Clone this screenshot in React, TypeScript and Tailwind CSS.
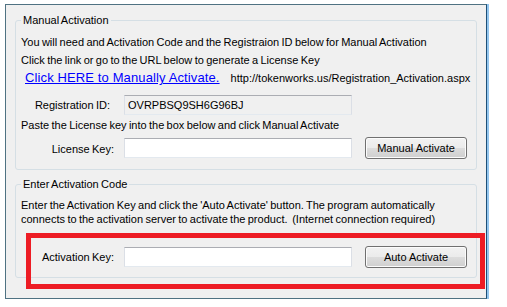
import type { ReactNode } from "react";

// Win7-style push button
function WinButton({ children }: { children: ReactNode }) {
  return (
    <button
      type="button"
      className="ml-[13px] h-[22px] w-[102px] rounded-[3px] border border-[#707070] bg-[linear-gradient(#f2f2f2_0%,#ebebeb_50%,#dddddd_50%,#cfcfcf_100%)] text-[11px] leading-[14px] text-black shadow-[inset_0_0_0_1px_#fcfcfc]"
    >
      {children}
    </button>
  );
}

// Win7-style text box
function WinTextBox({ value, readOnly, className }: { value?: string; readOnly?: boolean; className?: string }) {
  return (
    <input
      readOnly={readOnly}
      defaultValue={value}
      className={
        "h-[20px] w-[228px] border border-[#dbdfe6] border-t-[#abadb3] border-b-[#e3e9ef] px-[3px] text-[11px] leading-[14px] text-black outline-none " +
        (className ?? "")
      }
    />
  );
}

export default function App() {
  return (
    <div className="h-[307px] w-[507px] bg-white pl-[5px] pt-[4px] font-['Liberation_Sans',Arial,sans-serif] text-[11px] text-black [word-spacing:-0.7px]">
      {/* ── Dialog window ───────────────────────────────────────────────── */}
      <div className="relative h-[295px] w-[482px] border border-[#4f7282] border-r-[#1d4f77] bg-[#f0f0f0] pl-[9px] pt-[8px] shadow-[2px_0_0_#94c6ee]">
        {/* ── Manual Activation ─────────────────────────────────────────── */}
        <fieldset className="h-[157px] w-[462px] rounded-[3px] border border-[#d5dfe5] pl-[5px] pt-[6px]">
          <legend className="px-[2px] leading-[14px]">Manual Activation</legend>
          <p className="whitespace-nowrap leading-[18px]">
            You will need and Activation Code and the Registraion ID below for Manual Activation
          </p>
          <p className="whitespace-nowrap leading-[18px]">
            Click the link or go to the URL below to generate a License Key
          </p>
          <div className="flex h-[18px] items-center whitespace-nowrap">
            <a href="#" className="ml-[4px] text-[13px] leading-[18px] tracking-[0.12px] text-[#0000ff] underline [word-spacing:0px]">
              Click HERE to Manually Activate.
            </a>
            <span className="ml-[11px]">http://tokenworks.us/Registration_Activation.aspx</span>
          </div>
          <div className="mt-[8px] flex h-[20px] items-center">
            <span className="w-[89px] text-right">Registration ID:</span>
            <WinTextBox readOnly value="OVRPBSQ9SH6G96BJ" className="ml-[14px] bg-[#f0f0f0]" />
          </div>
          <p className="mt-[1px] whitespace-nowrap leading-[18px]">
            Paste the License key into the box below and click Manual Activate
          </p>
          <div className="mt-[3px] flex h-[22px] items-center">
            <span className="w-[93px] pt-[3px] text-right">License Key:</span>
            <WinTextBox className="ml-[10px] bg-white" />
            <WinButton>Manual Activate</WinButton>
          </div>
        </fieldset>

        {/* ── Enter Activation Code ─────────────────────────────────────── */}
        <fieldset className="mt-[7px] h-[101px] w-[462px] rounded-[3px] border border-[#d5dfe5] pl-[5px] pt-[7px]">
          <legend className="px-[2px] leading-[14px]">Enter Activation Code</legend>
          <p className="whitespace-pre leading-[14px]">
            Enter the Activation Key and click the 'Auto Activate' button. The program automatically
            <br />
            connects to the activation server to activate the product.  (Internet connection required)
          </p>
          <div className="mt-[20px] flex h-[22px] items-center">
            <span className="w-[93px] pt-[1px] text-right">Activation Key:</span>
            <WinTextBox className="ml-[10px] bg-white" />
            <WinButton>Auto Activate</WinButton>
          </div>
        </fieldset>

        {/* red highlight drawn over the screenshot */}
        <div className="pointer-events-none absolute left-[20px] top-[228px] h-[56px] w-[459px] border-[5px] border-[#ed1c24]" />
      </div>
    </div>
  );
}
